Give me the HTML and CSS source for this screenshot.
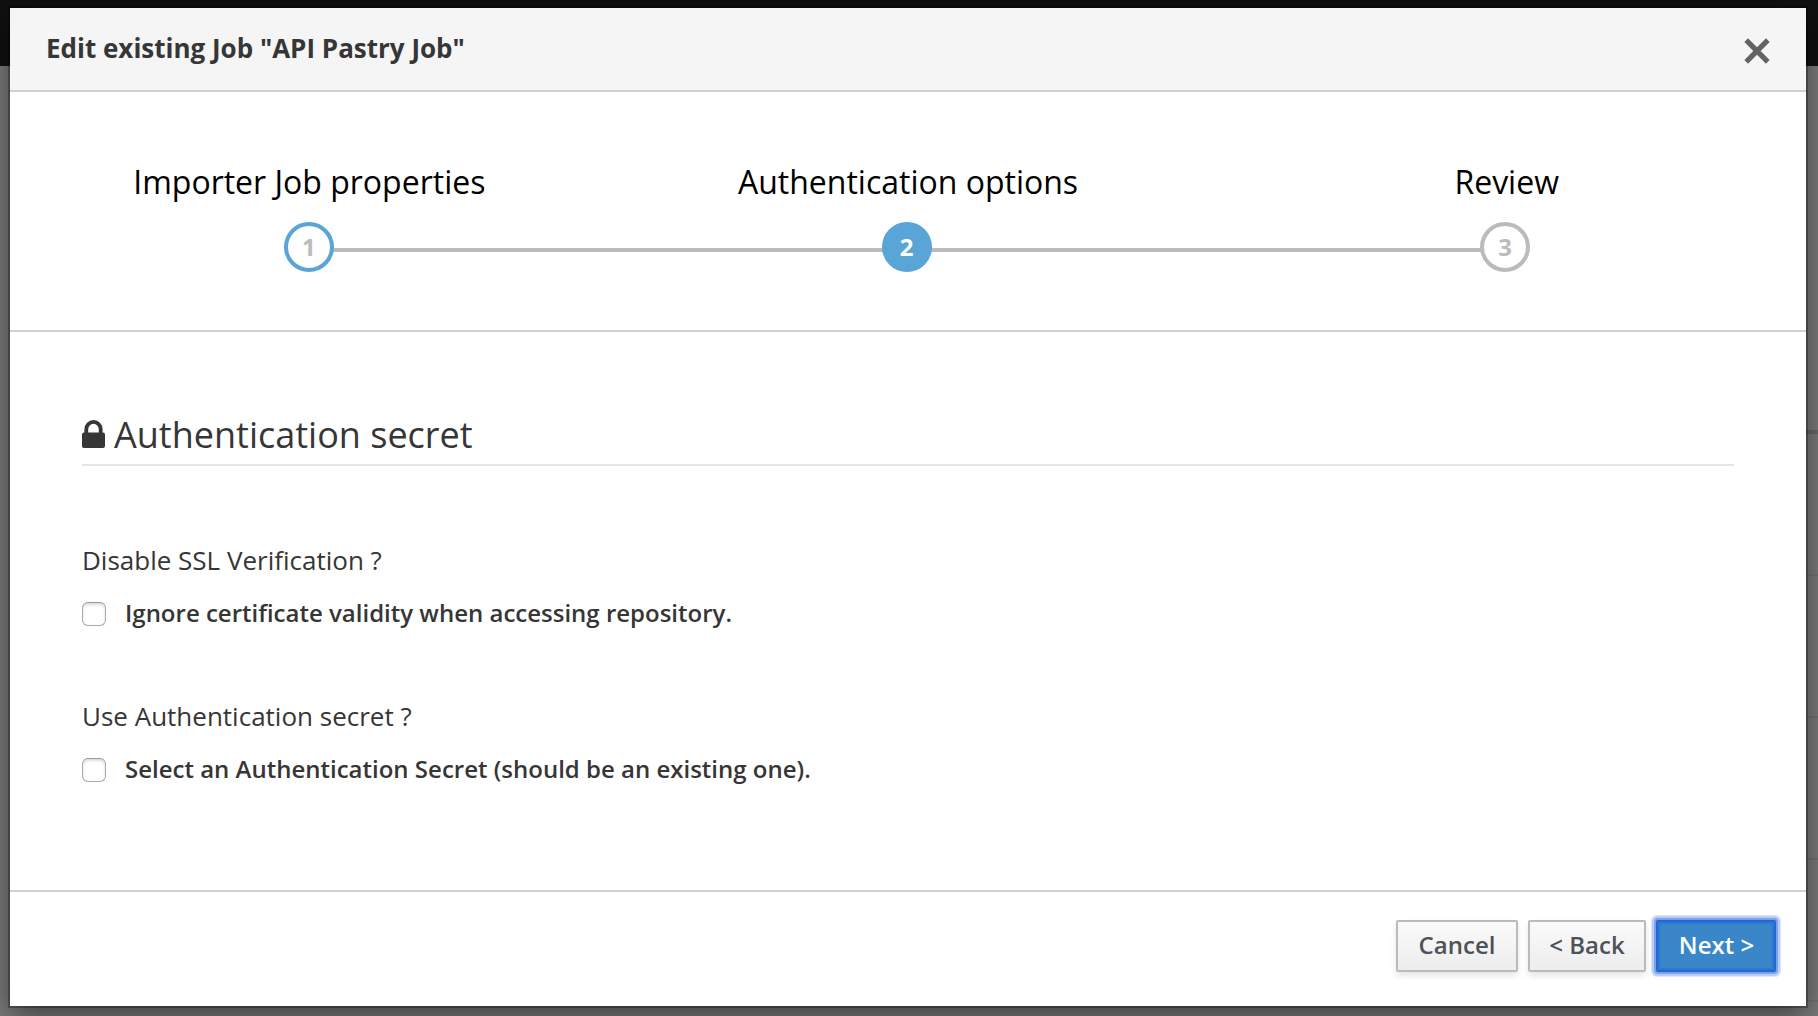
FILE: index.html
```
<!DOCTYPE html>
<html lang="en">
<head>
<meta charset="utf-8">
<title>Edit existing Job</title>
<link rel="stylesheet" href="styles.css">
</head>
<body>
<div class="page">
  <div class="navbar"></div>
  <div class="list">
    <div class="list-top"></div>
    <div class="row"></div>
    <div class="row"></div>
    <div class="row"></div>
    <div class="row"></div>
  </div>
</div>
<div class="backdrop">
  <section class="modal" role="dialog" aria-labelledby="modal-title">
    <header class="modal-header">
      <h1 class="modal-title" id="modal-title">Edit existing Job "API Pastry Job"</h1>
      <button class="close" type="button" aria-label="Close">
        <svg width="26" height="26" viewBox="0 0 26 26"><path d="M2.2 2.2L23.8 23.8M23.8 2.2L2.2 23.8" fill="none" stroke="#636363" stroke-width="5.2"/></svg>
      </button>
    </header>
    <ol class="steps">
      <li class="step visited"><span class="step-title">Importer Job properties</span><span class="step-line"><span class="step-number">1</span></span></li>
      <li class="step active"><span class="step-title">Authentication options</span><span class="step-line"><span class="step-number">2</span></span></li>
      <li class="step"><span class="step-title">Review</span><span class="step-line"><span class="step-number">3</span></span></li>
    </ol>
    <div class="modal-body">
      <h2 class="section-title">
        <svg class="lock" width="23" height="28" viewBox="0 0 24 29" preserveAspectRatio="none"><path fill="#363636" fill-rule="evenodd" d="M2 13H2.5V9.5a9.5 9.5 0 0 1 19 0V13H22a2 2 0 0 1 2 2v12a2 2 0 0 1-2 2H2a2 2 0 0 1-2-2V15a2 2 0 0 1 2-2zM6.5 13h11V9.5a5.5 5.5 0 0 0-11 0z"/></svg>
        <span>Authentication secret</span>
      </h2>
      <div class="field">
        <p class="question">Disable SSL Verification ?</p>
        <label class="option"><input class="checkbox" type="checkbox">Ignore certificate validity when accessing repository.</label>
      </div>
      <div class="field">
        <p class="question">Use Authentication secret ?</p>
        <label class="option"><input class="checkbox" type="checkbox">Select an Authentication Secret (should be an existing one).</label>
      </div>
    </div>
    <footer class="modal-footer">
      <button class="btn btn-cancel" type="button">Cancel</button>
      <button class="btn btn-back" type="button">&lt; Back</button>
      <button class="btn btn-next" type="button">Next &gt;</button>
    </footer>
  </section>
</div>
</body>
</html>
```
FILE: styles.css
```
* { box-sizing: border-box; }
body {
  margin: 0;
  height: 1016px;
  overflow: hidden;
  font-family: "Open Sans", "Noto Sans", sans-serif;
  font-size: 24px;
  line-height: 40px;
  color: #363636;
}
h1, h2, p, ol { margin: 0; padding: 0; }
.page { height: 1016px; background: #f5f5f5; }
.navbar { height: 66px; background: #202020; }
.list { margin-left: 40px; }
.list-top { height: 368px; border-bottom: 4px solid #d1d1d1; }
.row { height: 142px; border-bottom: 2px solid #e2e2e2; }

/* Dialog over the page */
.backdrop {
  position: absolute;
  inset: 0;
  overflow: hidden;
  padding: 8px 12px 10px 10px;
  background: rgba(0, 0, 0, .5);
}
.modal {
  display: flex;
  flex-direction: column;
  width: 1796px;
  height: 998px;
  background: #fff;
  box-shadow: 0 0 0 2px rgba(0, 0, 0, .27), 0 10px 30px rgba(0, 0, 0, .5);
}
.modal-header {
  display: flex;
  align-items: center;
  justify-content: space-between;
  height: 84px;
  padding: 0 36px;
  background: #f5f5f5;
  border-bottom: 2px solid #d1d1d1;
}
.modal-title { font-size: 26px; font-weight: 700; line-height: 44px; padding-bottom: 2px; }
.close { display: flex; margin: 3px 0 0; padding: 0; border: 0; background: none; }

/* Wizard steps */
.steps {
  display: flex;
  height: 240px;
  padding-top: 68px;
  list-style: none;
  border-bottom: 2px solid #d1d1d1;
}
.step { flex: 1; display: flex; flex-direction: column; text-align: center; }
.step-title { font-size: 32px; line-height: 44px; margin-bottom: 18px; color: #000; }
.step-line {
  display: flex;
  justify-content: center;
  height: 50px;
  margin-right: -1px;
  padding-right: 1px;
  background: linear-gradient(#bbb, #bbb) 0 26px / 100% 4px no-repeat;
}
.step:first-child .step-line { background-position: 100% 26px; background-size: 50% 4px; }
.step:last-child .step-line { background-size: 50% 4px; }
.step-number {
  width: 50px;
  height: 50px;
  padding-right: 1px;
  border: 4px solid #bbb;
  border-radius: 50%;
  background: #fff;
  color: #bbb;
  font-weight: 700;
  line-height: 42px;
}
.visited .step-number { border-color: #59a5d8; }
.active .step-number { margin-right: 2px; border-color: #59a5d8; background: #59a5d8; color: #fff; }
.step:last-child .step-number { margin-right: 4px; padding: 0 0 0 1px; }

.modal-body { flex: 1; padding: 80px 72px 0; }
.section-title {
  display: flex;
  align-items: center;
  gap: 9px;
  height: 54px;
  margin-bottom: 72px;
  padding-bottom: 6px;
  border-bottom: 2px solid #e5e5e5;
  font-size: 36px;
  font-weight: 400;
  line-height: 40px;
}
.lock { margin-bottom: 2px; }
.field { height: 156px; }
.question { font-size: 26px; line-height: 44px; margin-bottom: 11px; }
.option { display: flex; align-items: center; height: 40px; font-weight: 600; }
.checkbox {
  appearance: none;
  width: 24px;
  height: 24px;
  margin: 2px 19px 0 0;
  border: 1px solid #aaa;
  border-top-color: #999;
  border-radius: 6px;
  background: #fff;
  box-shadow: inset 0 2px 3px rgba(0, 0, 0, .14);
}

.modal-footer {
  display: flex;
  gap: 10px;
  justify-content: flex-end;
  height: 116px;
  padding: 28px 30px 0 0;
  border-top: 2px solid #d1d1d1;
}
.btn {
  height: 52px;
  padding: 0 0 2px;
  border: 2px solid #bbb;
  border-radius: 2px;
  background: linear-gradient(#fafafa, #ededed);
  box-shadow: 0 4px 6px rgba(3, 3, 3, .1);
  color: #4d5258;
  font: 600 24px/44px "Open Sans", "Noto Sans", sans-serif;
}
.btn-cancel { width: 122px; }
.btn-back { width: 118px; }
.btn-next {
  width: 120px;
  padding-left: 1px;
  border-color: #2468cf;
  background: #3987c9;
  color: #fff;
  box-shadow: 0 0 0 2px #7ba3ec, 0 0 0 4px #bacdf5, 0 0 0 5px #dbe6fa, inset 0 0 1px 2px #2d78d5;
}
```
